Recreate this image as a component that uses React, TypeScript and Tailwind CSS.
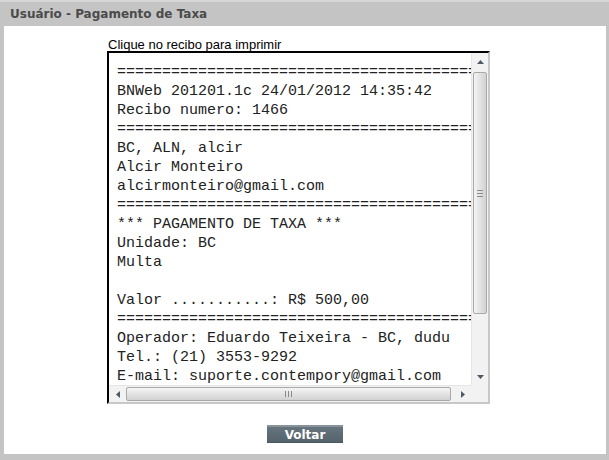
import React from "react";

const eq = "=".repeat(46);
const lines = [
  eq,
  "BNWeb 201201.1c 24/01/2012 14:35:42",
  "Recibo numero: 1466",
  eq,
  "BC, ALN, alcir",
  "Alcir Monteiro",
  "alcirmonteiro@gmail.com",
  eq,
  "*** PAGAMENTO DE TAXA ***",
  "Unidade: BC",
  "Multa",
  "",
  "Valor ...........: R$ 500,00",
  eq,
  "Operador: Eduardo Teixeira - BC, dudu",
  "Tel.: (21) 3553-9292",
  "E-mail: suporte.contempory@gmail.com",
  "",
];

function Tri({ dir }: { dir: "up" | "down" | "left" | "right" }) {
  const pts: Record<string, string> = {
    up: "0,4 3.5,0 7,4",
    down: "0,0 7,0 3.5,4",
    left: "4,0 4,7 0,3.5",
    right: "0,0 0,7 4,3.5",
  };
  const vertical = dir === "up" || dir === "down";
  return (
    <svg width={vertical ? 7 : 4} height={vertical ? 4 : 7} viewBox={vertical ? "0 0 7 4" : "0 0 4 7"}>
      <polygon points={pts[dir]} fill="#4d5a66" />
    </svg>
  );
}

export default function App() {
  return (
    <div className="w-[609px] h-[460px] flex flex-col bg-[#c4c4c4] pl-[4px] pr-[3px] pb-[6px] border-t-2 border-[#d6d6d6]">
      <div
        className="h-[24px] flex items-center pl-[6px] text-[12px] font-bold text-[#4b4b4b]"
        style={{ fontFamily: "'DejaVu Sans', Verdana, sans-serif" }}
      >
        Usuário - Pagamento de Taxa
      </div>
      <div className="flex-1 bg-white flex flex-col">
        <div className="w-[383px] ml-[103px] mt-[13px] flex flex-col">
          <div
            className="text-[13px] leading-[12px] text-black pl-[1px]"
            style={{ fontFamily: "'Liberation Sans', Arial, sans-serif" }}
          >
            Clique no recibo para imprimir
          </div>
          <div className="h-[353px] border-2 border-t-black border-l-black border-r-[#c8c8c8] border-b-[#c8c8c8] grid grid-cols-[362px_17px] grid-rows-[332px_17px]">
            <div className="overflow-hidden bg-white pl-[8px] pt-[10px]">
              <pre
                className="m-0 text-[15px] leading-[19px] text-[#222] whitespace-pre"
                style={{ fontFamily: "'Liberation Mono', 'Courier New', monospace" }}
              >
                {lines.join("\n")}
              </pre>
            </div>
            {/* vertical scrollbar */}
            <div className="bg-[#f2f2f2] flex flex-col border-l border-[#e6e6e6]">
              <div className="h-[17px] flex items-center justify-center">
                <Tri dir="up" />
              </div>
              <div className="mt-[2px] h-[242px] mx-[1px] rounded-[2px] border border-[#a9a9a9] bg-gradient-to-r from-[#f4f4f4] to-[#d2d2d2] flex items-center justify-center">
                <div className="flex flex-col gap-[2px]">
                  <div className="w-[6px] h-px bg-[#8a8a8a]" />
                  <div className="w-[6px] h-px bg-[#8a8a8a]" />
                  <div className="w-[6px] h-px bg-[#8a8a8a]" />
                </div>
              </div>
              <div className="flex-1" />
              <div className="h-[17px] flex items-center justify-center">
                <Tri dir="down" />
              </div>
            </div>
            {/* horizontal scrollbar */}
            <div className="bg-[#f2f2f2] flex border-t border-[#e6e6e6]">
              <div className="w-[17px] flex items-center justify-center">
                <Tri dir="left" />
              </div>
              <div className="my-[1px] w-[325px] rounded-[2px] border border-[#a9a9a9] bg-gradient-to-b from-[#f4f4f4] to-[#d2d2d2] flex items-center justify-center">
                <div className="flex gap-[2px]">
                  <div className="w-px h-[6px] bg-[#8a8a8a]" />
                  <div className="w-px h-[6px] bg-[#8a8a8a]" />
                  <div className="w-px h-[6px] bg-[#8a8a8a]" />
                </div>
              </div>
              <div className="flex-1" />
              <div className="w-[17px] flex items-center justify-center">
                <Tri dir="right" />
              </div>
            </div>
            <div className="bg-[#f2f2f2]" />
          </div>
        </div>
        <button
          className="self-center mt-[21px] w-[76px] h-[18px] flex items-center justify-center text-white text-[12px] font-bold border-t-2 border-[#87939a] border-b border-b-[#4a565e] bg-gradient-to-b from-[#66747d] to-[#55636c]"
          style={{ fontFamily: "'DejaVu Sans', Verdana, sans-serif" }}
        >
          Voltar
        </button>
      </div>
    </div>
  );
}
